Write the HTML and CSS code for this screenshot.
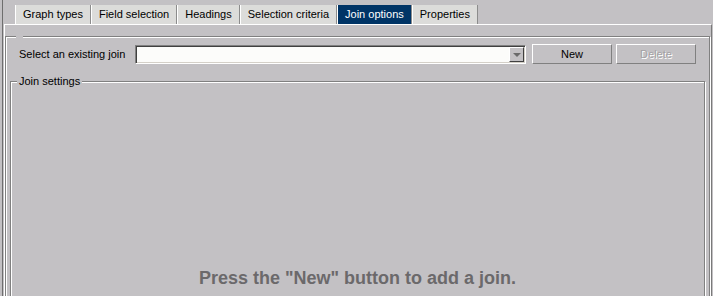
FILE: index.html
```html
<!DOCTYPE html>
<html>
<head>
	<meta charset="UTF-8">
	<title>Join options</title>
<link rel="stylesheet" href="styles.css">
</head>
<body>

<div class="window">
	<div class="tabs">
		<div class="tab">Graph types</div>
		<div class="tab">Field selection</div>
		<div class="tab">Headings</div>
		<div class="tab">Selection criteria</div>
		<div class="tab active">Join options</div>
		<div class="tab">Properties</div>
	</div>

	<div class="page">
		<fieldset class="group outer">
			<legend class="empty"></legend>
			<div class="row">
				<span class="label">Select an existing join</span>
				<div class="combo">
					<div class="combo-arrow"></div>
				</div>
				<button type="button" class="btn">New</button>
				<button type="button" class="btn" disabled>Delete</button>
			</div>

			<fieldset class="group inner">
				<legend>Join settings</legend>
				<div class="hint">Press the "New" button to add a join.</div>
			</fieldset>
		</fieldset>
	</div>
</div>

</body>
</html>
```

FILE: styles.css
```css
body {
	margin: 0;
	background-color: #c3c1c4;
	font-family: "Liberation Sans", Arial, sans-serif;
	font-size: 11px;
	color: #000;
	overflow: hidden;
}
.window {
	margin-left: 2px;
	border-left: 1px solid #6e6e6e;
	height: 296px;
	padding-top: 5px;
	box-sizing: border-box;
	overflow: hidden;
}

/* reiter oben */
.tabs {
	display: flex;
	padding-left: 12px;
}
.tab {
	height: 19px;
	line-height: 19px;
	padding: 0 7px;
	background-color: #dcdcda;
	border-left: 1px solid #fff;
	border-right: 1px solid #8c8c8c;
	white-space: nowrap;
}
.tab.active {
	background-color: #003466;
	color: #fff;
}

.page {
	margin-right: 1px;
	margin-left: 1px;
	border-top: 1px solid #fff;
	border-left: 1px solid #fff;
	border-right: 1px solid #7a7a7a;
	padding: 10px 1px 0 0;
	height: 300px;
}

/* gruppenrahmen, eingeritzt */
.group {
	margin: 0;
	padding: 0;
	min-width: 0;
	border: 1px solid #808080;
	box-shadow: 1px 1px 0 #fff, inset 1px 1px 0 #fff;
}
.group legend {
	margin-left: 6px;
	padding: 0 2px;
	background-color: #c3c1c4;
	line-height: 13px;
}
.group legend.empty {
	width: 7px;
	height: 3px;
	padding: 0;
}
.outer {
	padding: 0 4px;
	height: 300px;
}

.row {
	display: flex;
	align-items: center;
	height: 20px;
	padding: 6px 8px 0 9px;
}
.label {
	width: 116px;
}
.combo {
	width: 391px;
	height: 19px;
	box-sizing: border-box;
	border: 1px solid;
	border-color: #808080 #fff #fff #808080;
	box-shadow: inset 1px 1px 0 #404040, inset -1px -1px 0 #d4d0c8;
	background-color: #fcfcfa;
	display: flex;
	justify-content: flex-end;
	padding: 1px;
}
.combo-arrow {
	width: 15px;
	box-sizing: border-box;
	background-color: #c3c1c4;
	border: 1px solid;
	border-color: #fff #404040 #404040 #fff;
	display: flex;
	align-items: center;
	justify-content: center;
}
.combo-arrow::after {
	content: "";
	border-left: 4px solid transparent;
	border-right: 4px solid transparent;
	border-top: 4px solid #6a6a6a;
	margin-top: 1px;
}
.btn {
	width: 80px;
	height: 20px;
	margin-left: 6px;
	padding: 0;
	border: 1px solid;
	border-color: #fff #808080 #808080 #fff;
	background-color: #c3c1c4;
	font: inherit;
	color: #000;
}
.btn + .btn {
	margin-left: 4px;
}
.btn:disabled {
	color: #a4a2a4;
	text-shadow: 1px 1px 0 #fff;
}

.inner {
	margin-top: 11px;
	height: 240px;
}
.hint {
	text-align: center;
	font-size: 18px;
	font-weight: bold;
	color: #6b696b;
	padding-top: 180px;
}
```
